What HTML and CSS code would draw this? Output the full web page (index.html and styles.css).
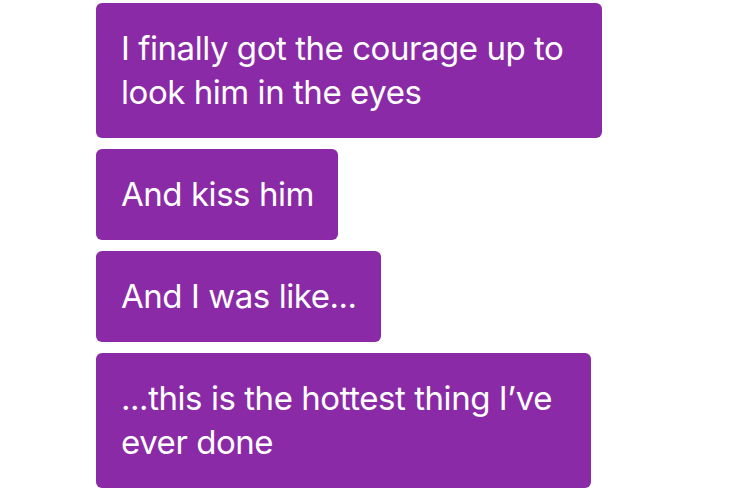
FILE: index.html
```html
<!doctype html>
<html lang="en">
<head>
  <meta charset="utf-8">
  <title>Messages</title>
  <link rel="stylesheet" href="styles.css">
</head>
<body>
  <div class="thread">
    <div class="bubble wrapped">I finally got the courage up to<br>look him in the eyes</div>
    <div class="bubble">And kiss him</div>
    <div class="bubble">And I was like...</div>
    <div class="bubble wrapped">...this is the hottest thing I’ve<br>ever done</div>
  </div>
</body>
</html>
```
FILE: styles.css
```css
:root{
  --bubble-color:#8a2aa6;
  --bubble-text:#ffffff;
}
body{
  margin:0;
  background:#ffffff;
  font-family:Inter, "Noto Sans", sans-serif;
}
.thread{
  display:flex;
  flex-direction:column;
  align-items:flex-start;
  gap:11px;
  padding:3px 0 0 96px;
}
.bubble{
  background-color:var(--bubble-color);
  color:var(--bubble-text);
  font-size:33px;
  line-height:44px;
  letter-spacing:-0.45px;
  padding:23px 24px 24px 25px;
  border-radius:6px;
  white-space:nowrap;
}
.wrapped{
  padding-right:39px;
}
```
